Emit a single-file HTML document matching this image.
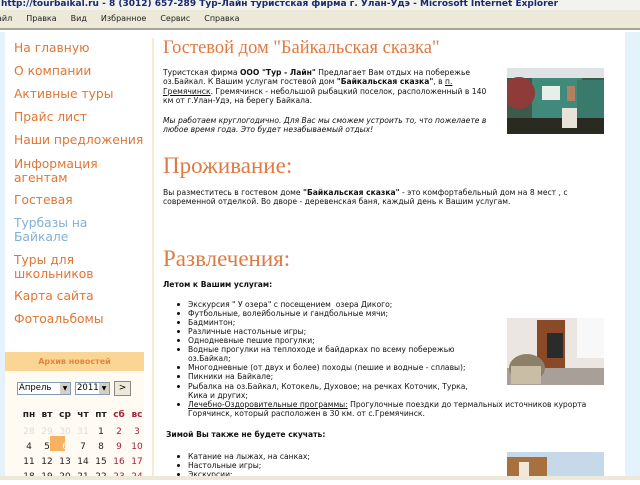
<!DOCTYPE html>
<html><head><meta charset="utf-8"><style>
*{margin:0;padding:0;box-sizing:border-box}
body{width:640px;height:480px;overflow:hidden;position:relative;background:#fff;font-family:"DejaVu Sans","Liberation Sans",sans-serif}
.a{position:absolute;white-space:nowrap}
#tb{left:0;top:0;width:640px;height:10px;background:#f2f2ee;font:bold 9px "DejaVu Sans",sans-serif;color:#1b2b6a;line-height:9px;padding-left:1px;overflow:hidden}
#mb{left:0;top:10px;width:640px;height:20px;background:#ece9d8;border-bottom:2px solid #a7a59a;font:8px "DejaVu Sans",sans-serif;color:#222;line-height:18px}
#mb span{margin-right:14px}
.strip{background:#e3f2fb}
.nav{font-size:12.3px;color:#df7532;line-height:14px}
.nav.v{color:#7fb0da}
.t{font-size:7.6px;color:#111;line-height:9.3px}
.h{font-family:"Liberation Serif","DejaVu Serif",serif;color:#de7a44}
.photo{position:absolute}
.li{position:absolute;left:188px;font-size:7.6px;color:#111;line-height:9px;white-space:nowrap}
.li:before{content:"";position:absolute;left:-11px;top:3px;width:3px;height:3px;border-radius:50%;background:#111}
.cal{font-size:9px;color:#222;text-align:center;width:18px}
</style></head><body>
<div id="tb" class="a">http://tourbaikal.ru - 8 (3012) 657-289 Тур-Лайн туристская фирма г. Улан-Удэ - Microsoft Internet Explorer</div>
<div id="mb" class="a"><span style="margin-left:-3px">айл</span><span>Правка</span><span>Вид</span><span>Избранное</span><span>Сервис</span><span>Справка</span></div>
<div class="a strip" style="left:0;top:32px;width:5px;height:448px"></div>
<div class="a strip" style="left:625px;top:32px;width:15px;height:448px"></div>
<div class="a" style="left:152px;top:38px;width:2px;height:442px;background:#f6ebcf"></div>

<div class="a nav" style="left:14px;top:41px">На главную</div>
<div class="a nav" style="left:14px;top:64px">О компании</div>
<div class="a nav" style="left:14px;top:87px">Активные туры</div>
<div class="a nav" style="left:14px;top:110px">Прайс лист</div>
<div class="a nav" style="left:14px;top:133px">Наши предложения</div>
<div class="a nav" style="left:14px;top:157px">Информация<br>агентам</div>
<div class="a nav" style="left:14px;top:193px">Гостевая</div>
<div class="a nav v" style="left:14px;top:216px">Турбазы на<br>Байкале</div>
<div class="a nav" style="left:14px;top:253px">Туры для<br>школьников</div>
<div class="a nav" style="left:14px;top:289px">Карта сайта</div>
<div class="a nav" style="left:14px;top:312px">Фотоальбомы</div>

<div class="a" style="left:5px;top:352px;width:139px;height:128px;background:#fffaf2"></div>
<div class="a" style="left:5px;top:352px;width:139px;height:19px;background:#fbd595;color:#e0883a;font-size:8px;font-weight:bold;text-align:center;line-height:19px">Архив новостей</div>
<div class="a" style="left:17px;top:382px;width:54px;height:13px;background:#fff;border:1px solid #7f9db9;font-size:8.5px;line-height:11px;padding-left:1px">Апрель<span style="position:absolute;right:0;top:0;width:10px;height:11px;background:#d4d0c8;font-size:6px;text-align:center">▼</span></div>
<div class="a" style="left:75px;top:382px;width:35px;height:13px;background:#fff;border:1px solid #7f9db9;font-size:8.5px;line-height:11px;padding-left:1px">2011<span style="position:absolute;right:0;top:0;width:10px;height:11px;background:#d4d0c8;font-size:6px;text-align:center">▼</span></div>
<div class="a" style="left:114px;top:381px;width:17px;height:15px;background:#ece9d8;border:1px solid #888;font-size:9px;text-align:center;line-height:13px">&gt;</div>
<div class="a" style="left:20px;top:410px;font-size:8.5px;font-weight:bold;line-height:10px">
<span class="cal" style="display:inline-block">пн</span><span class="cal" style="display:inline-block">вт</span><span class="cal" style="display:inline-block">ср</span><span class="cal" style="display:inline-block">чт</span><span class="cal" style="display:inline-block">пт</span><span class="cal" style="display:inline-block;color:#a0243a">сб</span><span class="cal" style="display:inline-block;color:#a0243a">вс</span></div>
<div class="a" style="left:50px;top:436px;width:15px;height:15px;background:#f6b25e"></div>
<div class="a" style="left:20px;top:425px;font-size:9px;line-height:15px">
<div><span class="cal" style="display:inline-block;color:#ddd">28</span><span class="cal" style="display:inline-block;color:#ddd">29</span><span class="cal" style="display:inline-block;color:#ddd">30</span><span class="cal" style="display:inline-block;color:#ddd">31</span><span class="cal" style="display:inline-block">1</span><span class="cal" style="display:inline-block;color:#a0243a">2</span><span class="cal" style="display:inline-block;color:#a0243a">3</span></div>
<div><span class="cal" style="display:inline-block">4</span><span class="cal" style="display:inline-block">5</span><span class="cal" style="display:inline-block;color:#fff">6</span><span class="cal" style="display:inline-block">7</span><span class="cal" style="display:inline-block">8</span><span class="cal" style="display:inline-block;color:#a0243a">9</span><span class="cal" style="display:inline-block;color:#a0243a">10</span></div>
<div><span class="cal" style="display:inline-block">11</span><span class="cal" style="display:inline-block">12</span><span class="cal" style="display:inline-block">13</span><span class="cal" style="display:inline-block">14</span><span class="cal" style="display:inline-block">15</span><span class="cal" style="display:inline-block;color:#a0243a">16</span><span class="cal" style="display:inline-block;color:#a0243a">17</span></div>
<div><span class="cal" style="display:inline-block">18</span><span class="cal" style="display:inline-block">19</span><span class="cal" style="display:inline-block">20</span><span class="cal" style="display:inline-block">21</span><span class="cal" style="display:inline-block">22</span><span class="cal" style="display:inline-block;color:#a0243a">23</span><span class="cal" style="display:inline-block;color:#a0243a">24</span></div>
</div>

<div class="a h" style="left:163px;top:38px;font-size:18.5px">Гостевой дом "Байкальская сказка"</div>
<div class="a t" style="left:163px;top:68px">Туристская фирма <b>ООО "Тур - Лайн"</b> Предлагает Вам отдых на побережье<br>оз.Байкал. К Вашим услугам гостевой дом <b>"Байкальская сказка"</b>, в <u>п.</u><br><u>Гремячинск</u>. Гремячинск - небольшой рыбацкий поселок, расположенный в 140<br>км от г.Улан-Удэ, на берегу Байкала.</div>
<div class="a t" style="left:163px;top:116px;font-style:italic">Мы работаем круглогодично. Для Вас мы сможем устроить то, что пожелаете в<br>любое время года. Это будет незабываемый отдых!</div>
<svg class="photo" style="left:507px;top:68px" width="97" height="66"><rect width="97" height="66" fill="#3d5a4a"/><rect x="0" y="0" width="97" height="10" fill="#dfe3e6"/><rect x="25" y="10" width="50" height="45" fill="#3f8a7a"/><rect x="35" y="18" width="18" height="14" fill="#e8efe9"/><rect x="60" y="18" width="8" height="15" fill="#b08060"/><rect x="70" y="12" width="27" height="40" fill="#3a7a6c"/><circle cx="12" cy="25" r="16" fill="#8e3b3a"/><rect x="0" y="50" width="97" height="16" fill="#2a2a20"/><rect x="55" y="40" width="15" height="20" fill="#e9e2d8"/></svg>

<div class="a h" style="left:163px;top:153px;font-size:23px">Проживание:</div>
<div class="a t" style="left:163px;top:188px">Вы разместитесь в гостевом доме <b>"Байкальская сказка"</b> - это комфортабельный дом на 8 мест , с<br>современной отделкой. Во дворе - деревенская баня, каждый день к Вашим услугам.</div>

<div class="a h" style="left:163px;top:246px;font-size:23px">Развлечения:</div>
<div class="a t" style="left:163px;top:280px;font-weight:bold">Летом к Вашим услугам:</div>
<div class="li" style="top:300px">Экскурсия " У озера" с посещением &nbsp;озера Дикого;</div>
<div class="li" style="top:309px">Футбольные, волейбольные и гандбольные мячи;</div>
<div class="li" style="top:318px">Бадминтон;</div>
<div class="li" style="top:327px">Различные настольные игры;</div>
<div class="li" style="top:336px">Однодневные пешие прогулки;</div>
<div class="li" style="top:345px">Водные прогулки на теплоходе и байдарках по всему побережью<br>оз.Байкал;</div>
<div class="li" style="top:363px">Многодневные (от двух и более) походы (пешие и водные - сплавы);</div>
<div class="li" style="top:372px">Пикники на Байкале;</div>
<div class="li" style="top:382px">Рыбалка на оз.Байкал, Котокель, Духовое; на речках Коточик, Турка,<br>Кика и других;</div>
<div class="li" style="top:400px"><u>Лечебно-Оздоровительные программы:</u> Прогулочные поездки до термальных источников курорта<br>Горячинск, который расположен в 30 км. от с.Гремячинск.</div>
<svg class="photo" style="left:507px;top:318px" width="97" height="67"><rect width="97" height="67" fill="#ece6e2"/><rect x="70" y="0" width="27" height="40" fill="#f8f8f8"/><rect x="30" y="2" width="28" height="55" fill="#8a4a28"/><rect x="40" y="15" width="16" height="25" fill="#2b2b2b"/><rect x="0" y="50" width="97" height="17" fill="#a8a098"/><ellipse cx="20" cy="50" rx="18" ry="14" fill="#8c8068"/><rect x="4" y="48" width="30" height="18" fill="#c9bda5"/></svg>

<div class="a t" style="left:166px;top:430px;font-weight:bold">Зимой Вы также не будете скучать:</div>
<div class="li" style="top:452px">Катание на лыжах, на санках;</div>
<div class="li" style="top:461px">Настольные игры;</div>
<div class="li" style="top:470px">Экскурсии;</div>
<svg class="photo" style="left:507px;top:452px" width="97" height="28"><rect width="97" height="28" fill="#c5d9e8"/><rect x="0" y="5" width="40" height="23" fill="#a8703e"/><rect x="12" y="10" width="10" height="18" fill="#f0e8d8"/></svg>
<div class="a" style="left:0;top:476px;width:640px;height:4px;background:#ece9d8"></div>
</body></html>
